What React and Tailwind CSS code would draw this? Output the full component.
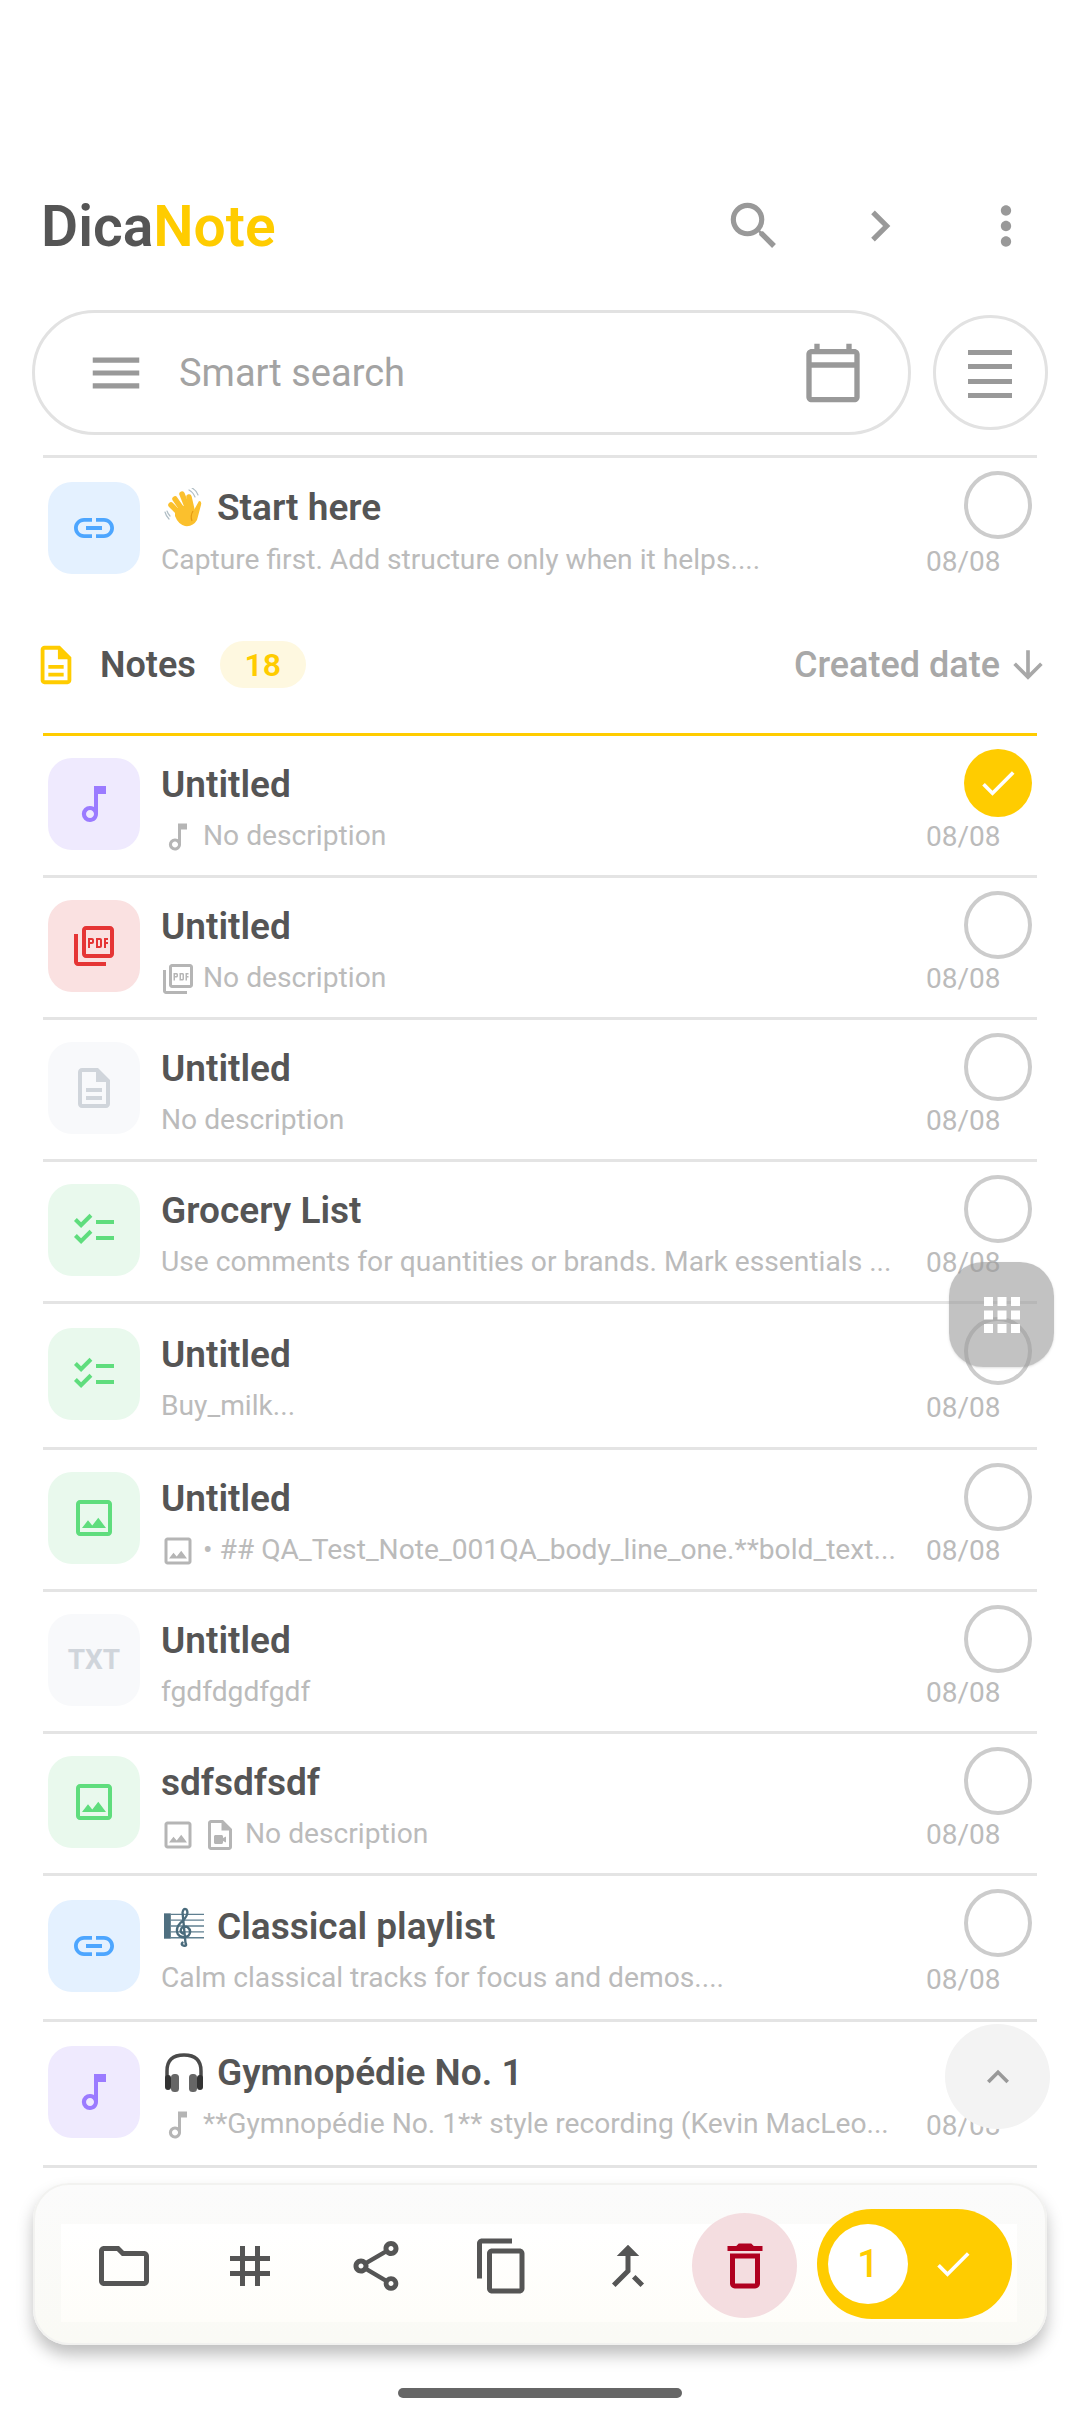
import React from "react";
import {
  MdSearch,
  MdChevronRight,
  MdMoreVert,
  MdMenu,
  MdOutlineCalendarToday,
  MdLink,
  MdOutlineMusicNote,
  MdOutlinePictureAsPdf,
  MdOutlineDescription,
  MdOutlineChecklist,
  MdOutlineImage,
  MdOutlineVideoFile,
  MdArrowDownward,
  MdCheck,
  MdApps,
  MdExpandLess,
  MdOutlineFolder,
  MdTag,
  MdOutlineShare,
  MdOutlineContentCopy,
  MdCallMerge,
  MdOutlineDelete,
} from "react-icons/md";

const WaveEmoji = () => (
  <svg viewBox="0 0 40 40" className="w-[40px] h-[40px]">
    <g fill="none" stroke="#b0bec5" strokeWidth="1.2" strokeLinecap="round">
      <path d="M25 2 Q29 4 31 9" />
      <path d="M28 0 Q32 2 34 7" />
      <path d="M1 24 Q2 28 5 31" />
      <path d="M3 23 Q4 26 6 28" />
    </g>
    <g fill="none" stroke="#fbc02d" strokeWidth="5.5" strokeLinecap="round">
      <path d="M7 17 L16 26" />
      <path d="M11 11 L20 24" />
      <path d="M18 6 L24 21" />
      <path d="M25 9 L28 22" />
    </g>
    <path d="M11 21 L25 16 L30 22 L35 13 Q38 13 37 17 L33 32 Q29 39 21 38 Q14 36 11 28 Z" fill="#fbc02d" />
    <path d="M29 23 Q26 28 28 33" fill="none" stroke="#e59a12" strokeWidth="1.2" />
  </svg>
);

const ClefEmoji = () => (
  <svg viewBox="0 0 41 40" className="w-[40px] h-[40px]">
    <rect x="0" y="6" width="7" height="26" fill="#4f6f80" />
    <g stroke="#5f7f90" strokeWidth="1.4">
      <path d="M7 7 H41" />
      <path d="M7 13 H41" />
      <path d="M7 19 H41" />
      <path d="M7 25 H41" />
      <path d="M7 31 H41" />
    </g>
    <path
      d="M22 36 Q24 40 20 39 Q17 38 19 36 M22 36 L19 5 Q20 0 23 2 Q26 6 20 13 Q11 20 14 27 Q18 33 25 29 Q29 24 24 20 Q18 18 17 24 Q18 27 21 27"
      fill="none"
      stroke="#4a6b7c"
      strokeWidth="2.4"
      strokeLinecap="round"
    />
  </svg>
);

const HeadphoneEmoji = () => (
  <svg viewBox="0 0 40 40" className="w-[40px] h-[40px]">
    <path d="M3 26 V18 Q3 2 20 2 Q37 2 37 18 V26" fill="none" stroke="#4a4a4a" strokeWidth="3.5" />
    <rect x="1" y="22" width="6" height="15" rx="3" fill="#333" />
    <rect x="7" y="21" width="8" height="18" rx="3.5" fill="#666" />
    <rect x="33" y="22" width="6" height="15" rx="3" fill="#333" />
    <rect x="25" y="21" width="8" height="18" rx="3.5" fill="#666" />
  </svg>
);

const tones = {
  link: { box: "bg-[#e4f1ff] text-[#4da6ff]", Icon: MdLink },
  music: { box: "bg-[#efeafe] text-[#9b7bff]", Icon: MdOutlineMusicNote },
  pdf: { box: "bg-[#fae1e1] text-[#e53535]", Icon: MdOutlinePictureAsPdf },
  doc: { box: "bg-[#f8f9fb] text-[#d0d5db]", Icon: MdOutlineDescription },
  check: { box: "bg-[#e9f9ed] text-[#5fdd7d]", Icon: MdOutlineChecklist },
  image: { box: "bg-[#e9f9ed] text-[#5fdd7d]", Icon: MdOutlineImage },
  txt: { box: "bg-[#f8f9fb] text-[#d0d5db]", Icon: null },
};

const notes = [
  { type: "music", title: "Untitled", desc: "No description", meta: [MdOutlineMusicNote], selected: true },
  { type: "pdf", title: "Untitled", desc: "No description", meta: [MdOutlinePictureAsPdf] },
  { type: "doc", title: "Untitled", desc: "No description" },
  { type: "check", title: "Grocery List", desc: "Use comments for quantities or brands. Mark essentials ..." },
  { type: "check", title: "Untitled", desc: "Buy_milk...", tall: true },
  { type: "image", title: "Untitled", desc: "• ## QA_Test_Note_001QA_body_line_one.**bold_text...", meta: [MdOutlineImage] },
  { type: "txt", title: "Untitled", desc: "fgdfdgdfgdf" },
  { type: "image", title: "sdfsdfsdf", desc: "No description", meta: [MdOutlineImage, MdOutlineVideoFile] },
  { type: "link", title: "Classical playlist", emoji: ClefEmoji, desc: "Calm classical tracks for focus and demos....", tall: true },
  {
    type: "music",
    title: "Gymnopédie No. 1",
    emoji: HeadphoneEmoji,
    desc: "**Gymnopédie No. 1** style recording (Kevin MacLeo...",
    meta: [MdOutlineMusicNote],
    tall: true,
  },
];

function NoteRow({ note, noBorder }) {
  const tone = tones[note.type];
  const Emoji = note.emoji;
  return (
    <div
      className={`flex items-center pl-[5px] ${note.tall ? "h-[146px]" : "h-[142px]"} border-b-[3px] ${
        noBorder ? "border-transparent" : "border-[#e4e4e4] pb-[3px]"
      }`}
    >
      <div className={`w-[92px] h-[92px] rounded-[24px] flex items-center justify-center shrink-0 ${tone.box}`}>
        {tone.Icon ? <tone.Icon size={48} /> : <span className="text-[28px] font-bold">TXT</span>}
      </div>
      <div className="ml-[21px] mt-[8px] flex-1 min-w-0 flex flex-col gap-[11px] whitespace-nowrap overflow-hidden">
        <div className="flex items-center h-[46px] text-[37px] font-semibold text-[#555555]">
          {Emoji && (
            <span className="ml-[3px] mr-[13px]">
              <Emoji />
            </span>
          )}
          {note.title}
        </div>
        <div className="flex items-center h-[36px] text-[28.2px] text-[#bbbbbb]">
          {note.meta &&
            note.meta.map((Meta, i) => <Meta key={i} size={36} className="mr-[7px] -ml-[1px] shrink-0 text-[#b5b5b5]" />)}
          {note.desc}
        </div>
      </div>
      <div
        className={`w-[111px] self-stretch shrink-0 flex flex-col justify-between pt-[13px] ${
          note.tall ? "pb-[19px]" : "pb-[18px]"
        }`}
      >
        {note.selected ? (
          <div className="self-end mr-[5px] w-[68px] h-[68px] rounded-full bg-[#ffcc00] flex items-center justify-center">
            <MdCheck size={44} className="text-white" />
          </div>
        ) : (
          <div className="self-end mr-[5px] w-[68px] h-[68px] rounded-full border-[4px] border-[#cccccc]" />
        )}
        <div className="text-[28px] leading-[34px] text-[#bbbbbb]">08/08</div>
      </div>
    </div>
  );
}

const barIcons = [MdOutlineFolder, MdTag, MdOutlineShare, MdOutlineContentCopy, MdCallMerge];

export default function App() {
  return (
    <div
      className="relative w-[1080px] h-[2424px] bg-white overflow-hidden pt-[164px]"
      style={{ fontFamily: "Roboto, sans-serif" }}
    >
      {/* Header */}
      <div className="flex items-center h-[124px] pl-[41px]">
        <div className="text-[57px] font-semibold leading-none text-[#555555]">
          Dica<span className="text-[#ffcc00]">Note</span>
        </div>
        <div className="flex-1" />
        <MdSearch size={62} className="text-[#999999]" />
        <MdChevronRight size={62} className="text-[#999999] ml-[64px]" />
        <MdMoreVert size={62} className="text-[#999999] ml-[64px] mr-[43px]" />
      </div>

      {/* Search */}
      <div className="flex items-center mt-[22px] pl-[32px] h-[125px]">
        <div className="w-[879px] h-[125px] rounded-full border-[3px] border-[#e2e2e2] flex items-center pl-[50px] pr-[43px]">
          <MdMenu size={62} className="text-[#999999]" />
          <span className="ml-[32px] mt-[2px] text-[38px] text-[#a3a3a3]">Smart search</span>
          <div className="flex-1" />
          <MdOutlineCalendarToday size={64} className="text-[#999999]" />
        </div>
        <div className="ml-[22px] w-[115px] h-[115px] rounded-full border-[3px] border-[#e2e2e2] flex items-center justify-center">
          <svg width="44" height="48" viewBox="0 0 44 48" fill="#999999" className="-ml-[2px] mt-[2px]">
            <rect y="0" width="44" height="5" />
            <rect y="14" width="44" height="5" />
            <rect y="29" width="44" height="5" />
            <rect y="43" width="44" height="5" />
          </svg>
        </div>
      </div>

      <div className="mx-[43px] mt-[20px] h-[3px] bg-[#e4e4e4]" />

      <div className="mx-[43px]">
        <NoteRow
          noBorder
          note={{
            type: "link",
            title: "Start here",
            emoji: WaveEmoji,
            desc: "Capture first. Add structure only when it helps....",
          }}
        />
      </div>

      {/* Section heading */}
      <div className="flex items-center h-[133px] pl-[33px] pr-[30px] pb-[4px]">
        <MdOutlineDescription size={46} className="text-[#ffcc00]" />
        <span className="ml-[21px] text-[36px] font-semibold text-[#555555]">Notes</span>
        <span className="ml-[24px] w-[86px] h-[47px] rounded-full bg-[#fef8e0] flex items-center justify-center text-[32px] font-semibold text-[#ffcc00]">
          18
        </span>
        <div className="flex-1" />
        <span className="text-[36px] font-medium text-[#a8a8a8]">Created date</span>
        <MdArrowDownward size={44} className="text-[#a8a8a8] ml-[6px]" />
      </div>

      {/* Notes list */}
      <div className="mx-[43px] border-t-[3px] border-[#ffcc00]">
        {notes.map((note, i) => (
          <NoteRow key={i} note={note} />
        ))}
      </div>

      {/* Floating grid button */}
      <div className="absolute left-[949px] top-[1262px] w-[105px] h-[105px] rounded-[34px] bg-[#999999]/60 flex items-center justify-center shadow-sm">
        <MdApps size={54} className="text-white" />
      </div>

      {/* Scroll to top */}
      <div className="absolute left-[945px] top-[2024px] w-[105px] h-[105px] rounded-full bg-[#f3f3f3] flex items-center justify-center">
        <MdExpandLess size={44} className="text-[#999999]" />
      </div>

      {/* Selection bar */}
      <div className="absolute left-[33px] top-[2183px] w-[1014px] h-[162px] rounded-[36px] border-[2px] border-[#f2f2f0] bg-gradient-to-b from-[#fbfbfb] to-[#fafaf5] shadow-[0_10px_16px_rgba(0,0,0,0.25)] flex items-start justify-center pt-[39px]">
        <div className="w-[956px] h-[98px] bg-gradient-to-b from-white to-[#fefdf9] flex items-center pb-[14px] -ml-[2px] relative">
          {barIcons.map((Icon, i) => (
            <div key={i} className="w-[126px] flex items-center justify-center shrink-0">
              <Icon size={60} className="text-[#555555]" />
            </div>
          ))}
          <div className="absolute left-[631px] top-[-11px] w-[105px] h-[105px] rounded-full bg-[#f4dde0] flex items-center justify-center">
            <MdOutlineDelete size={60} className="text-[#b00020]" />
          </div>
          <div className="absolute left-[756px] top-[-15px] w-[195px] h-[110px] rounded-full bg-[#ffcc00] flex items-center pl-[11px]">
            <div className="w-[80px] h-[80px] rounded-full bg-white flex items-center justify-center text-[38px] font-medium text-[#ffcc00]">
              1
            </div>
            <MdCheck size={44} className="text-white ml-[23px]" />
          </div>
        </div>
      </div>

      {/* Gesture bar */}
      <div className="absolute left-[398px] top-[2388px] w-[284px] h-[10px] rounded-full bg-[#666666]" />
    </div>
  );
}
